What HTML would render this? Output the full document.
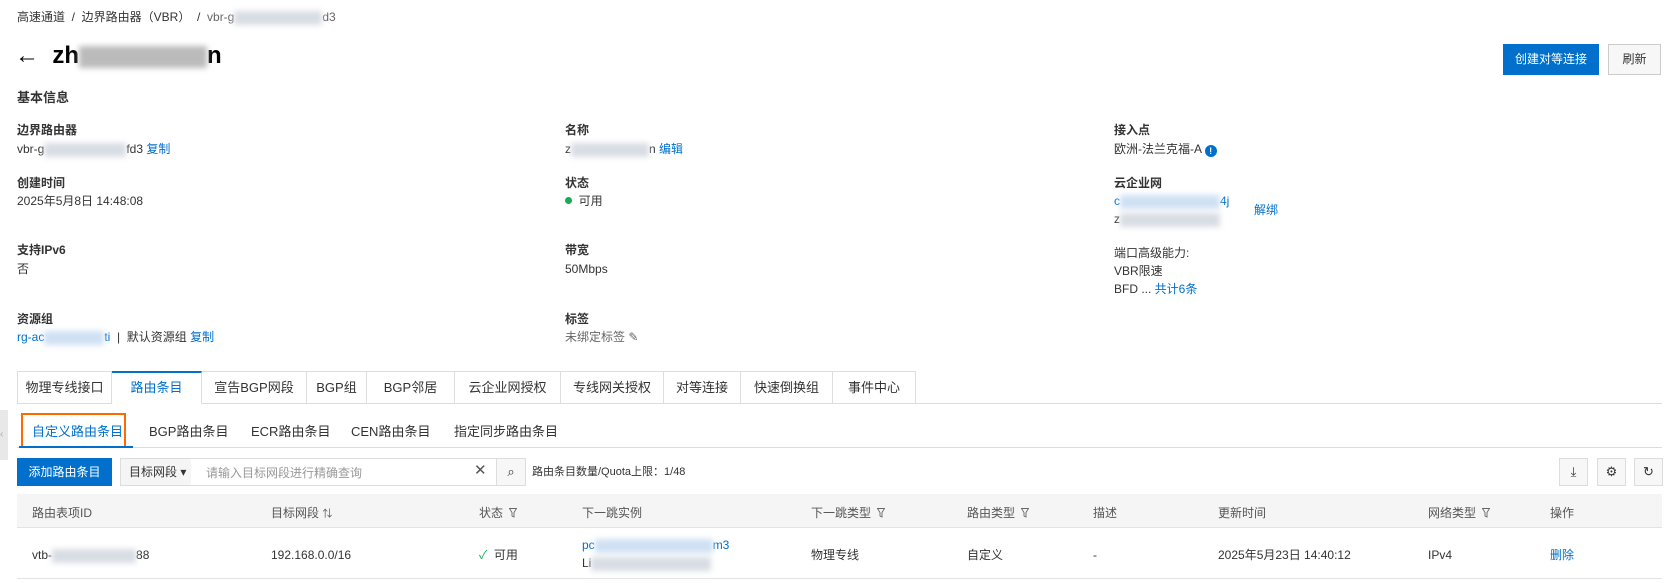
<!DOCTYPE html>
<html><head><meta charset="utf-8"><style>
*{box-sizing:border-box;margin:0;padding:0}
body{width:1679px;height:583px;overflow:hidden;background:#fff;font-family:"Liberation Sans","Noto Sans CJK SC",sans-serif;font-size:12px;line-height:16px;color:#333;position:relative}
.a{position:absolute;white-space:nowrap}
.lnk{color:#0070cc}
.lbl{color:#333;font-weight:bold}
.blur{display:inline-block;height:14px;background:#d8dde4;filter:blur(3px);vertical-align:middle}
.tab{position:absolute;top:371px;height:33px;border:1px solid #ddd;border-left:none;background:#fff;font-size:13px;line-height:31px;text-align:center;color:#333}
.th{position:absolute;top:505px;color:#555}
.td{position:absolute;top:547px;color:#333;height:16px;line-height:16px}
.ib{position:absolute;top:458px;width:29px;height:28px;border:1px solid #ddd;background:#f7f7f7;text-align:center;line-height:26px;font-size:13px}
.flt{display:inline-block;width:8px;height:10px;margin-left:6px;vertical-align:-1px}
</style></head><body>
<div class="a" style="left:17px;top:9px;font-size:12px;color:#333">高速通道 &nbsp;/&nbsp; 边界路由器（VBR） &nbsp;/&nbsp; <span style="color:#666">vbr-g<span class="blur" style="width:88px"></span>d3</span></div>
<div class="a" style="left:15px;top:42px;font-size:24px;line-height:28px;color:#000;font-weight:bold">←&nbsp; zh<span class="blur" style="width:128px;height:22px;background:#bbb"></span>n</div>
<div class="a" style="left:1503px;top:44px;width:96px;height:31px;background:#0070cc;color:#fff;text-align:center;line-height:31px">创建对等连接</div>
<div class="a" style="left:1608px;top:44px;width:53px;height:31px;border:1px solid #ccc;background:#f7f7f7;text-align:center;line-height:29px">刷新</div>
<div class="a lbl" style="left:17px;top:90px;font-size:13px">基本信息</div>

<div class="a lbl" style="left:17px;top:122px">边界路由器</div>
<div class="a" style="left:17px;top:141px">vbr-g<span class="blur" style="width:82px"></span>fd3 <span class="lnk">复制</span></div>
<div class="a lbl" style="left:17px;top:175px">创建时间</div>
<div class="a" style="left:17px;top:193px">2025年5月8日 14:48:08</div>
<div class="a lbl" style="left:17px;top:242px">支持IPv6</div>
<div class="a" style="left:17px;top:261px">否</div>
<div class="a lbl" style="left:17px;top:311px">资源组</div>
<div class="a" style="left:17px;top:329px"><span class="lnk">rg-ac<span class="blur" style="width:60px;background:#cfe0f3"></span>ti</span> &nbsp;|&nbsp; 默认资源组 <span class="lnk">复制</span></div>

<div class="a lbl" style="left:565px;top:122px">名称</div>
<div class="a" style="left:565px;top:141px">z<span class="blur" style="width:78px"></span>n <span class="lnk">编辑</span></div>
<div class="a lbl" style="left:565px;top:175px">状态</div>
<div class="a" style="left:565px;top:193px"><span style="display:inline-block;width:7px;height:7px;border-radius:50%;background:#1aaa55;vertical-align:1px"></span> &nbsp;可用</div>
<div class="a lbl" style="left:565px;top:242px">带宽</div>
<div class="a" style="left:565px;top:261px">50Mbps</div>
<div class="a lbl" style="left:565px;top:311px">标签</div>
<div class="a" style="left:565px;top:329px;color:#666">未绑定标签 ✎</div>

<div class="a lbl" style="left:1114px;top:122px">接入点</div>
<div class="a" style="left:1114px;top:141px">欧洲-法兰克福-A <span style="display:inline-block;width:12px;height:12px;border-radius:50%;background:#0070cc;color:#fff;font-size:9px;text-align:center;line-height:12px;font-weight:bold;vertical-align:-1px">!</span></div>
<div class="a lbl" style="left:1114px;top:175px">云企业网</div>
<div class="a" style="left:1114px;top:193px"><span class="lnk">c<span class="blur" style="width:100px;background:#cfe0f3"></span>4j</span></div>
<div class="a" style="left:1114px;top:211px">z<span class="blur" style="width:100px"></span></div>
<div class="a lnk" style="left:1254px;top:202px">解绑</div>
<div class="a lbl" style="left:1114px;top:245px;font-weight:normal">端口高级能力:</div>
<div class="a" style="left:1114px;top:263px">VBR限速</div>
<div class="a" style="left:1114px;top:281px">BFD ... <span class="lnk">共计6条</span></div>

<div class="a" style="left:17px;top:403px;width:1645px;border-top:1px solid #ddd"></div>
<div class="tab" style="left:17px;width:95px;border-left:1px solid #ddd">物理专线接口</div>
<div class="tab" style="left:112px;width:90px;color:#0070cc;border-top:2px solid #0070cc;border-bottom-color:#fff;line-height:30px">路由条目</div>
<div class="tab" style="left:202px;width:105px">宣告BGP网段</div>
<div class="tab" style="left:307px;width:60px">BGP组</div>
<div class="tab" style="left:367px;width:88px">BGP邻居</div>
<div class="tab" style="left:455px;width:106px">云企业网授权</div>
<div class="tab" style="left:561px;width:103px">专线网关授权</div>
<div class="tab" style="left:664px;width:77px">对等连接</div>
<div class="tab" style="left:741px;width:92px">快速倒换组</div>
<div class="tab" style="left:833px;width:83px">事件中心</div>

<div class="a" style="left:0;top:410px;width:8px;height:50px;background:#e8e8e8;color:#aaa;font-size:10px;line-height:50px">‹</div>
<div class="a" style="left:17px;top:447px;width:1645px;border-top:1px solid #ddd"></div>
<div class="a" style="left:21px;top:413px;width:105px;height:35px;border:2px solid #ff6a00"></div>
<div class="a" style="left:19px;top:446px;width:114px;border-top:2px solid #0070cc"></div>
<div class="a" style="left:32px;top:424px;font-size:13px;color:#0070cc">自定义路由条目</div>
<div class="a" style="left:149px;top:424px;font-size:13px">BGP路由条目</div>
<div class="a" style="left:251px;top:424px;font-size:13px">ECR路由条目</div>
<div class="a" style="left:351px;top:424px;font-size:13px">CEN路由条目</div>
<div class="a" style="left:454px;top:424px;font-size:13px">指定同步路由条目</div>

<div class="a" style="left:17px;top:458px;width:95px;height:28px;background:#0070cc;color:#fff;text-align:center;line-height:28px">添加路由条目</div>
<div class="a" style="left:120px;top:458px;width:406px;height:28px;border:1px solid #ddd"></div>
<div class="a" style="left:121px;top:459px;width:70px;height:26px;background:#f5f5f5;line-height:26px;padding-left:8px">目标网段 ▾</div>
<div class="a" style="left:206px;top:465px;color:#999">请输入目标网段进行精确查询</div>
<div class="a" style="left:474px;top:463px;font-size:15px;color:#555">✕</div>
<div class="a" style="left:496px;top:458px;width:30px;height:28px;border:1px solid #ddd;background:#f7f7f7;text-align:center;line-height:26px;font-size:13px">⌕</div>
<div class="a" style="left:532px;top:464px;font-size:11px">路由条目数量/Quota上限：1/48</div>
<div class="ib" style="left:1559px">⤓</div>
<div class="ib" style="left:1597px">⚙</div>
<div class="ib" style="left:1634px">↻</div>

<div class="a" style="left:17px;top:494px;width:1645px;height:34px;background:#f5f5f5;border-bottom:1px solid #e3e3e3"></div>
<svg width="0" height="0" style="position:absolute"><defs><symbol id="f" viewBox="0 0 8 10"><path d="M0.5 0.5h7L5 4.5v4.5L3 8V4.5z" fill="none" stroke="#666" stroke-width="0.9"/></symbol></defs></svg>
<div class="th" style="left:32px">路由表项ID</div>
<div class="th" style="left:271px">目标网段 <span style="font-size:10px">⇅</span></div>
<div class="th" style="left:479px">状态<svg class="flt"><use href="#f"/></svg></div>
<div class="th" style="left:582px">下一跳实例</div>
<div class="th" style="left:811px">下一跳类型<svg class="flt"><use href="#f"/></svg></div>
<div class="th" style="left:967px">路由类型<svg class="flt"><use href="#f"/></svg></div>
<div class="th" style="left:1093px">描述</div>
<div class="th" style="left:1218px">更新时间</div>
<div class="th" style="left:1428px">网络类型<svg class="flt"><use href="#f"/></svg></div>
<div class="th" style="left:1550px">操作</div>

<div class="td" style="left:32px">vtb-<span class="blur" style="width:84px"></span>88</div>
<div class="td" style="left:271px">192.168.0.0/16</div>
<div class="td" style="left:479px"><span style="color:#1aaa55">✓</span> &nbsp;可用</div>
<div class="a" style="left:582px;top:537px"><span class="lnk">pc<span class="blur" style="width:118px;background:#cfe0f3"></span>m3</span></div>
<div class="a" style="left:582px;top:555px">Li<span class="blur" style="width:120px"></span></div>
<div class="td" style="left:811px">物理专线</div>
<div class="td" style="left:967px">自定义</div>
<div class="td" style="left:1093px">-</div>
<div class="td" style="left:1218px">2025年5月23日 14:40:12</div>
<div class="td" style="left:1428px">IPv4</div>
<div class="td" style="left:1550px;color:#0070cc">删除</div>
<div class="a" style="left:17px;top:578px;width:1645px;border-top:1px solid #e3e3e3"></div>
</body></html>
